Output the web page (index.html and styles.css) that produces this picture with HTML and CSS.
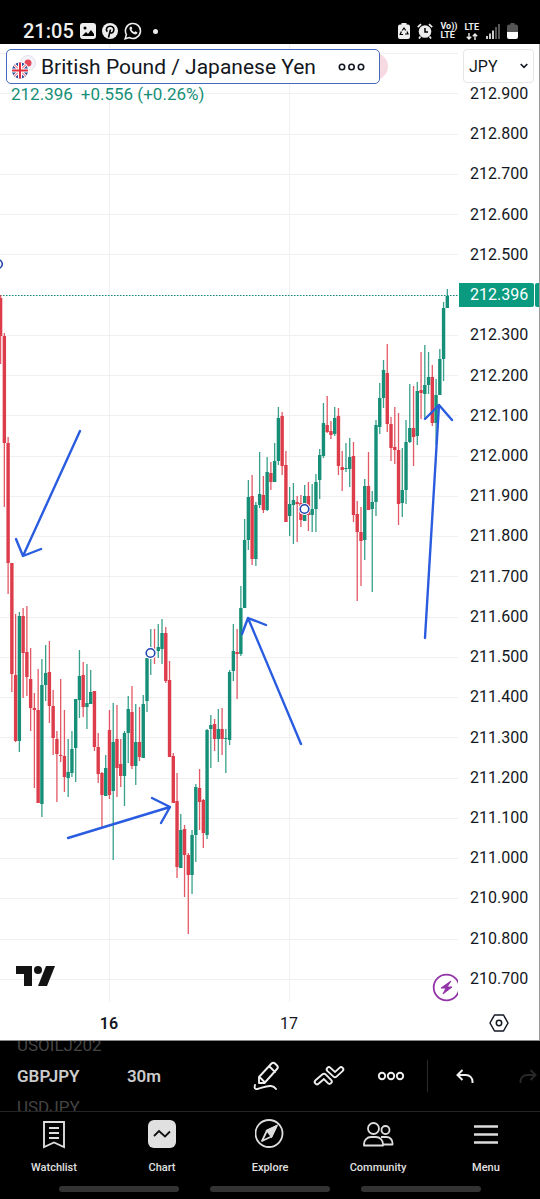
FILE: index.html
```
<!DOCTYPE html>
<html lang="en">
<head>
  <meta charset="UTF-8" />
  <meta name="viewport" content="width=device-width, initial-scale=1" />
  <title>GBPJPY Chart</title>
  <link rel="stylesheet" href="styles.css">
</head>
<body>

  <header class="status-bar">
    <div class="status-left">
      <span class="clock">21:05</span>
      <svg width="16" height="16" viewBox="0 0 16 16"><rect width="16" height="16" rx="3" fill="#eee"/><circle cx="5" cy="5" r="1.5" fill="#000"/><path d="M2 13l4-4 2 2 3-4 3 4v2z" fill="#000"/></svg>
      <svg width="16" height="16" viewBox="0 0 16 16"><circle cx="8" cy="8" r="8" fill="#eee"/><path d="M6.500 14.500l2-8M5.300 8.800C3.200 6 5 3.300 8.300 3.300c3 0 4.200 2.200 3.300 4.600-.8 2.400-3 2.700-4 1.300" fill="none" stroke="#000" stroke-width="1.600"/></svg>
      <svg width="18" height="18" viewBox="0 0 18 18"><path d="M1.200 16.800l1.200-4.200a7.500 7.500 0 1 1 2.900 2.900z" fill="none" stroke="#eee" stroke-width="1.600"/><path d="M6.300 4.800c-3 2.500 2.900 9 6.200 7.300 1.300-.8 1-1.900.3-2.200l-1.400-.7-1.200 1.100C8.700 9.600 8 8.600 7.500 7.600l.8-1-.7-1.800z" fill="#eee"/></svg>
      <span class="dot"></span>
    </div>
    <div class="status-right">
      <svg width="12" height="16" viewBox="0 0 12 16"><path d="M3.500 0h5v1.500H10a2 2 0 0 1 2 2V14a2 2 0 0 1-2 2H2a2 2 0 0 1-2-2V3.500a2 2 0 0 1 2-2h1.500z" fill="#eee"/><path d="M4.300 7.500L6 5l1.700 2.500M9 8.500l1 2.500H7M5 11.500H2.200L3.400 8.500" fill="none" stroke="#000" stroke-width="1.200"/></svg>
      <svg width="16" height="16" viewBox="0 0 16 16"><circle cx="8" cy="8.500" r="6.300" fill="#eee"/><path d="M.8 4.200L4 1.200M15.200 4.200L12 1.200M3.500 13.500L2 15.500M12.500 13.500L14 15.500" stroke="#eee" stroke-width="1.800"/><path d="M8 5v4h3" fill="none" stroke="#000" stroke-width="1.500"/></svg>
      <span class="net">Vo))<br>LTE</span>
      <span class="net">LTE
        <svg width="12" height="7" viewBox="0 0 12 7"><path d="M3 0v6M.8 3.800L3 6l2.200-2.200M9 7V1M6.800 3.200L9 1l2.200 2.200" fill="none" stroke="#eee" stroke-width="1.400"/></svg>
      </span>
      <svg width="14" height="15" viewBox="0 0 14 15"><path d="M1 15v-3M4 15V9.500M7 15V6.500" stroke="#eee" stroke-width="1.700"/><path d="M10 15V3M13 15V0" stroke="#666" stroke-width="1.700"/></svg>
      <svg width="11" height="16" viewBox="0 0 11 16"><path d="M3.500 0h4v1.500H9a2 2 0 0 1 2 2V9H0V3.500a2 2 0 0 1 2-2h1.500z" fill="#555"/><path d="M0 9h11v5a2 2 0 0 1-2 2H2a2 2 0 0 1-2-2z" fill="#fff"/></svg>
    </div>
  </header>

  <main class="chart">
    <div class="plot">
      <svg id="candles" class="candles" viewBox="0 44 459 958" role="img" aria-label="GBPJPY 30 minute candles"></svg>

      <div class="legend">
        <div class="symbol-box">
          <svg class="flags" width="26" height="26" viewBox="0 0 26 26">
            <circle cx="17" cy="9" r="7.500" fill="#f3f3fa" stroke="#e2e2ee"/>
            <circle cx="17" cy="9" r="3.500" fill="#e5495a"/>
            <circle cx="9" cy="16.500" r="9" fill="#fff"/>
            <clipPath id="uk"><circle cx="9" cy="16.500" r="8"/></clipPath>
            <g clip-path="url(#uk)">
              <path d="M0 8h18v18H0z" fill="#2b4a9b"/>
              <path d="M1 8.500l16 16M17 8.500l-16 16" stroke="#fff" stroke-width="3"/>
              <path d="M1 8.500l16 16M17 8.500l-16 16" stroke="#e0414f" stroke-width="1"/>
              <path d="M9 8v18M0 16.500h18" stroke="#fff" stroke-width="4"/>
              <path d="M9 8v18M0 16.500h18" stroke="#e0303f" stroke-width="2"/>
            </g>
          </svg>
          <h1>British Pound / Japanese Yen</h1>
          <button class="more" aria-label="More">
            <svg width="28" height="8" viewBox="0 0 28 8" fill="none" stroke="#131722" stroke-width="1.600"><circle cx="4" cy="4" r="2.700"/><circle cx="13.500" cy="4" r="2.700"/><circle cx="23" cy="4" r="2.700"/></svg>
          </button>
        </div>
        <p class="quote"><span>212.396</span><span>+0.556 (+0.26%)</span></p>
      </div>
    </div>

    <div class="price-axis">
      <div class="currency">
        <select aria-label="Currency">
          <option>JPY</option>
          <option>GBP</option>
        </select>
        <svg width="8" height="6" viewBox="0 0 8 6"><path d="M.7 1L4 4.300 7.300 1" fill="none" stroke="#131722" stroke-width="1.600"/></svg>
      </div>
      <ul id="prices" class="prices"></ul>
    </div>

    <div class="time-axis"><span class="major">16</span><span>17</span></div>
    <button class="axis-settings" aria-label="Chart settings">
      <svg width="20" height="18" viewBox="0 0 20 18" fill="none" stroke="#131722" stroke-width="1.500"><path d="M5.500 1h9L19 9l-4.500 8h-9L1 9z" stroke-linejoin="round"/><circle cx="10" cy="9" r="2.700"/></svg>
    </button>
  </main>

  <div class="toolbar">
    <div class="wheel">
      <span class="far">USOILJ202</span>
      <span>GBPJPY</span>
      <span class="far">USDJPY</span>
    </div>
    <button class="interval">30m</button>
    <div class="tools">
      <button aria-label="Draw">
        <svg width="28" height="32" viewBox="0 0 28 32" fill="none" stroke="#eee" stroke-width="1.900" stroke-linejoin="round" stroke-linecap="round"><path d="M6 23v-6L18.500 3.500a2.500 2.500 0 0 1 3.500 0l2 2a2.500 2.500 0 0 1 0 3.500L11.500 23zM16 6l6 6M6.500 17l5.500 5.500"/><path d="M2 25c-1 3 0 4.500 2.500 4C9 28 13 25.500 18 26c2.500.3 4 1.500 5 3"/></svg>
      </button>
      <button aria-label="Indicators">
        <svg width="32" height="22" viewBox="0 0 32 22" fill="none" stroke-linejoin="round" stroke-linecap="round"><path d="M4 17l7-6 5.500 5.500" stroke="#eee" stroke-width="6.400"/><path d="M4 17l7-6 5.500 5.500" stroke="#000" stroke-width="2.600"/><path d="M16 4.500l6 5.500 6-5.500" stroke="#eee" stroke-width="6.400"/><path d="M16 4.500l6 5.500 6-5.500" stroke="#000" stroke-width="2.600"/></svg>
      </button>
      <button aria-label="More tools">
        <svg width="28" height="10" viewBox="0 0 28 10" fill="none" stroke="#eee" stroke-width="1.900"><circle cx="5" cy="5" r="3.200"/><circle cx="14" cy="5" r="3.200"/><circle cx="23" cy="5" r="3.200"/></svg>
      </button>
    </div>
    <div class="history">
      <button aria-label="Undo">
        <svg width="18" height="15" viewBox="0 0 18 15" fill="none" stroke="#eee" stroke-width="2"><path d="M6.500 1L1.500 6l5 5M2 6h8a6.500 6.500 0 0 1 6.500 6.500V14"/></svg>
      </button>
      <button aria-label="Redo" disabled>
        <svg width="18" height="15" viewBox="0 0 18 15" fill="none" stroke="#282828" stroke-width="2"><path d="M11.500 1l5 5-5 5M16 6H8a6.500 6.500 0 0 0-6.500 6.500V14"/></svg>
      </button>
    </div>
  </div>

  <nav class="tabs">
    <a href="#watchlist">
      <svg width="28" height="30" viewBox="0 0 28 30" fill="none" stroke="#ddd" stroke-width="1.900"><path d="M4 3h20v25l-10-4.500L4 28z"/><path d="M9 9h10M9 14h10M9 19h10"/></svg>
      Watchlist
    </a>
    <a href="#chart">
      <svg width="28" height="30" viewBox="0 0 28 30"><rect y="1" width="28" height="28" rx="6" fill="#e0e0e0"/><path d="M6 17l5-5 6 5.500 5-5" fill="none" stroke="#111" stroke-width="1.800"/></svg>
      Chart
    </a>
    <a href="#explore">
      <svg width="30" height="30" viewBox="0 0 30 30" fill="none" stroke="#ddd" stroke-width="1.800"><circle cx="14" cy="14.500" r="13.500"/><path d="M21.500 7L12 11.500 7 22l9.500-4.500z" stroke-linejoin="round"/><path d="M21.500 7L12 11.500l4.500 6z" fill="#ddd"/></svg>
      Explore
    </a>
    <a href="#community">
      <svg width="32" height="30" viewBox="0 0 32 30" fill="none" stroke="#ddd" stroke-width="1.800"><circle cx="11.500" cy="9.500" r="5.500"/><circle cx="23.500" cy="11" r="4"/><path d="M2 26.500V25a7 7 0 0 1 7-7h5a7 7 0 0 1 7 7v1.500zM19 18h5.500a6 6 0 0 1 6 6v1.500H21" stroke-linejoin="round"/></svg>
      Community
    </a>
    <a href="#menu">
      <svg width="24" height="30" viewBox="0 0 24 30" stroke="#ddd" stroke-width="2.400"><path d="M0 7.500h24M0 15.500h24M0 23.500h24"/></svg>
      Menu
    </a>
  </nav>

  <div class="gestures"><i></i><i></i><i></i></div>

  <script src="chart.js"></script>
</body>
</html>
```
FILE: styles.css
```
* {
  box-sizing: border-box;
}
body {
  margin: 0;
  background: #000;
  color: #131722;
  font-family: Roboto, "Liberation Sans", sans-serif;
  font-size: 16px;
}
button {
  background: none;
  border: none;
  padding: 0;
  color: inherit;
  font: inherit;
  cursor: pointer;
}
svg {
  display: block;
  flex: none;
}

/* status bar */
.status-bar {
  display: flex;
  justify-content: space-between;
  height: 44px;
  padding: 18px 22px 0 23px;
  color: #eee;
}
.status-left, .status-right {
  display: flex;
  align-items: center;
  gap: 7px;
  height: 26px;
}
.status-left {
  gap: 6px;
}
.clock {
  font-size: 20px;
  font-weight: 500;
}
.dot {
  width: 5px;
  height: 5px;
  margin-left: 5px;
  border-radius: 50%;
  background: #eee;
}
.net {
  font-size: 9px;
  font-weight: 700;
  line-height: 9px;
}
.net svg {
  margin: 1px auto 0;
}

/* chart */
.chart {
  display: grid;
  grid-template-columns: 1fr 80px;
  grid-template-rows: auto 38px;
  background: #fff;
  border-right: 1px solid #999;
  border-bottom: 1px solid #888;
}
.plot {
  position: relative;
  min-width: 0;
}
.candles {
  width: 100%;
  height: auto;
}
.grid-line {
  stroke: #f0f0f1;
}
.last-price {
  stroke: #168f78;
  stroke-dasharray: 1.5 1.5;
}
.up {
  fill: #168f78;
}
.down {
  fill: #dd3c4a;
}
.wick {
  opacity: 0.85;
}
.arrow {
  fill: none;
  stroke: #2a5ce0;
  stroke-width: 2.4;
  stroke-linecap: round;
  stroke-linejoin: round;
}
.anchor {
  fill: #fff;
  stroke: #2446b0;
  stroke-width: 1.6;
}
.legend {
  position: absolute;
  top: 5px;
  left: 6px;
  z-index: 0;
}
.legend::before {
  content: "";
  position: absolute;
  top: 4px;
  right: 0;
  z-index: -1;
  width: 27px;
  height: 27px;
  border-radius: 50%;
  background: #f7d9e2;
}
.symbol-box {
  display: flex;
  align-items: center;
  height: 35px;
  margin-right: 8px;
  padding: 0 13px 0 4px;
  border: 1px solid #4469bd;
  border-radius: 5px;
  background: #fff;
}
.symbol-box h1 {
  margin: 0 22px 0 4px;
  font-size: 21px;
  font-weight: 400;
  line-height: 32px;
  white-space: nowrap;
}
.quote {
  display: flex;
  gap: 8px;
  margin: 0;
  padding-left: 5px;
  color: #168f78;
  font-size: 17px;
  line-height: 20px;
}
.price-axis {
  display: flex;
  flex-direction: column;
  padding: 5px 0 11px;
}
.currency {
  position: relative;
  margin: 0 5px 0 4px;
}
.currency select {
  display: block;
  width: 100%;
  height: 34px;
  padding: 0 5px;
  border: 1px solid #e6e6e9;
  border-radius: 4px;
  background: #fff;
  color: #131722;
  font: inherit;
  appearance: none;
}
.currency svg {
  position: absolute;
  top: 14px;
  right: 6px;
  pointer-events: none;
}
.prices {
  display: flex;
  flex: 1;
  flex-direction: column;
  justify-content: space-between;
  margin: -1px 0 0;
  padding: 0;
  list-style: none;
}
.prices li {
  height: 24px;
  padding-left: 11px;
  line-height: 24px;
}
.prices .current {
  display: flex;
  gap: 1px;
  padding-left: 0;
}
.current span {
  flex: 1;
  padding-left: 11px;
  border-radius: 0 2px 2px 0;
  background: #0a9a80;
  color: #fff;
}
.current i {
  width: 4px;
  border-radius: 2px 0 0 2px;
  background: #0a9a80;
}
.time-axis {
  display: flex;
  align-items: center;
  padding-left: 19px;
}
.time-axis span {
  width: 180px;
  padding-top: 4px;
  text-align: center;
}
.time-axis .major {
  font-weight: 600;
}
.axis-settings {
  display: flex;
  align-items: center;
  justify-content: center;
  padding-top: 4px;
}

/* bottom toolbar */
.toolbar {
  display: flex;
  align-items: center;
  height: 71px;
  border-bottom: 1px solid #242424;
  color: #ccc;
}
.wheel {
  display: flex;
  flex-direction: column;
  justify-content: center;
  width: 110px;
  height: 70px;
  padding-left: 17px;
  overflow: hidden;
  font-size: 17px;
  font-weight: 600;
  line-height: 31px;
}
.wheel .far {
  color: #444;
  font-weight: 400;
}
.interval {
  width: 68px;
  font-size: 17px;
  font-weight: 600;
}
.tools {
  display: flex;
  flex: 1;
  align-items: center;
  justify-content: flex-end;
  gap: 32px;
  padding-right: 22px;
}
.history {
  display: flex;
  gap: 45px;
  padding: 9px 3px 8px 28px;
  border-left: 1px solid #2a2a2a;
}

/* tabs */
.tabs {
  display: grid;
  grid-template-columns: repeat(5, 1fr);
  height: 74px;
  padding-top: 7px;
}
.tabs a {
  display: flex;
  flex-direction: column;
  align-items: center;
  gap: 11px;
  color: #e0e0e0;
  font-size: 11px;
  font-weight: 500;
  line-height: 16px;
  text-decoration: none;
}
.gestures {
  display: flex;
  justify-content: center;
  gap: 31px;
  padding-bottom: 7px;
}
.gestures i {
  width: 120px;
  height: 6px;
  border-radius: 3px;
  background: #333;
}
```
FILE: chart.js
```
// high, body top, body bottom, low (chart units), 1 = up candle
const candles = [
  [295,298,336,364,0],[333,336,443,507,0],[437,443,563,594,0],[563,563,674,692,0],[614,675,741,742,0],[612,616,741,752,1],
  [608,616,653,698,0],[606,652,677,696,0],[648,679,708,731,0],[693,708,710,788,0],[669,710,803,803,0],[659,685,804,817,1],
  [645,673,685,701,1],[641,672,706,723,0],[690,706,738,755,0],[731,739,754,802,0],[679,755,756,762,0],[710,756,777,792,0],
  [739,772,778,797,1],[731,749,773,777,1],[699,699,748,782,1],[650,676,700,718,1],[662,675,707,717,0],[664,703,707,729,1],
  [670,692,704,704,1],[691,691,747,751,0],[733,747,774,783,0],[772,773,795,827,0],[755,768,796,796,1],[710,730,795,799,0],
  [703,742,791,860,1],[705,739,768,797,0],[739,764,776,787,0],[731,733,776,806,1],[696,709,733,763,1],[686,712,766,769,0],
  [704,742,766,785,1],[707,742,757,761,0],[695,704,758,758,1],[658,658,701,712,1],[629,650,655,675,1],[629,652,653,664,0],
  [624,647,651,658,1],[619,633,649,664,1],[627,633,681,683,0],[661,680,757,757,0],[753,756,803,803,0],[773,801,867,878,0],
  [814,830,868,868,1],[825,829,855,897,0],[853,855,875,934,0],[830,835,875,894,1],[784,787,835,862,1],[769,788,802,830,0],
  [799,800,833,848,0],[729,730,835,839,1],[715,725,729,768,1],[719,724,739,751,0],[709,729,739,762,1],[708,729,739,755,0],
  [729,738,739,773,1],[670,672,740,745,1],[624,651,671,681,1],[629,652,654,699,0],[586,608,654,656,1],[519,540,608,608,1],
  [480,497,540,550,1],[475,496,559,565,0],[502,505,559,566,1],[452,494,505,508,1],[476,495,510,513,0],[457,472,510,511,1],
  [462,473,482,490,0],[443,461,482,482,1],[407,418,461,465,1],[412,416,466,475,0],[451,465,522,522,0],[487,504,516,536,1],
  [483,500,505,544,1],[496,502,504,542,0],[495,503,520,527,0],[485,496,521,521,1],[482,496,515,531,0],[484,509,515,532,1],
  [474,482,509,532,1],[449,455,480,499,1],[403,423,456,458,1],[396,425,432,433,0],[421,431,435,439,0],[407,418,434,436,1],
  [408,416,466,475,0],[451,467,470,491,0],[443,468,469,472,1],[438,457,469,487,1],[442,456,515,522,0],[501,514,532,601,0],
  [507,532,541,586,0],[479,486,540,560,1],[452,486,510,510,0],[491,502,509,592,1],[420,425,502,516,1],[383,398,427,434,1],
  [360,370,398,408,1],[344,373,424,432,0],[417,424,448,461,0],[407,447,450,464,0],[413,450,504,525,0],[448,490,503,517,1],
  [420,442,490,504,1],[384,428,442,443,1],[386,428,437,466,0],[382,391,436,445,1],[352,390,393,419,0],[345,385,394,419,1],
  [352,377,385,394,1],[365,377,423,426,0],[379,395,423,445,1],[349,359,395,395,1],[302,308,359,381,1],[289,296,308,308,1]
];

const arrows = [
  'M80 431L23 556M16 539l7 17 18-7',
  'M68 838l102-31M152 798l18 9-9 16',
  'M301 744L248 618M242 634l6-16 18 7',
  'M425 638l14-233M425 419l14-14 13 15'
];
const anchors = [[-2, 264], [150.5, 653], [304.5, 509]];

const gridTop = 53.5, gridStep = 40.25, barStep = 3.754;
let svg = '';

// grid
for (let y = gridTop; y < 1000; y += gridStep) {
  svg += `<path class="grid-line" d="M0 ${Math.floor(y) + 0.5}H458"/>`;
}
svg += '<path class="grid-line" d="M109.5 44V1002M289.5 44V1002"/>';
svg += '<path class="last-price" d="M0 295.5H459"/>';

candles.forEach(([high, open, close, low, up], i) => {
  const x = 0.6 + i * barStep;
  const dir = up ? 'up' : 'down';
  svg += `<rect class="${dir} wick" x="${x - 0.65}" y="${high}" width="1.3" height="${low - high}"/>`;
  svg += `<rect class="${dir}" x="${x - 1.7}" y="${open}" width="3.4" height="${close - open}"/>`;
});

arrows.forEach(d => svg += `<path class="arrow" d="${d}"/>`);
anchors.forEach(([x, y]) => {
  svg += `<circle cx="${x}" cy="${y}" r="6" fill="#fff"/><circle class="anchor" cx="${x}" cy="${y}" r="4.3"/>`;
});

// logo
svg += `<g fill="#131313"><path d="M16 966h16v20h-8v-12h-8z"/><circle cx="38" cy="970" r="4"/><path d="M46 966h9l-8 20h-9z"/></g>`;
// events badge
svg += `<g><circle cx="446.500" cy="987.500" r="12.800" fill="#fff" stroke="#9333a8" stroke-width="1.800"/>
  <path d="M451 981l-10 7h5l-3 6 9-7h-5z" fill="#9333a8" stroke="#9333a8" stroke-linejoin="round"/>
  <path d="M458 970h2v35h-2z" fill="#fff"/></g>`;

document.getElementById('candles').innerHTML = svg;

// price labels
let rows = '';
for (let i = 0; i <= 22; i++) {
  const price = (212.9 - i * 0.1).toFixed(3);
  rows += i === 5 ? '<li class="current"><span>212.396</span><i></i></li>' : `<li>${price}</li>`;
}
document.getElementById('prices').innerHTML = rows;
```
